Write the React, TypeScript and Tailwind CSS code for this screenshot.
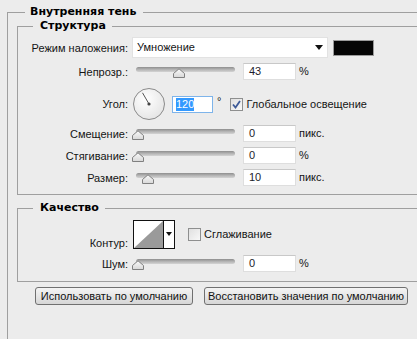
import React from "react";

const font = { fontFamily: '"Liberation Sans", Arial, sans-serif' };
const headFont = { fontFamily: '"DejaVu Sans", "Liberation Sans", sans-serif' };

function Thumb({ cls }: { cls: string }) {
  return (
    <svg className={`absolute top-[5px] ${cls}`} width="12" height="10" viewBox="0 0 12 10">
      <defs>
        <linearGradient id="tg" x1="0" y1="0" x2="0" y2="1">
          <stop offset="0" stopColor="#fafafa" />
          <stop offset="1" stopColor="#d8d8d8" />
        </linearGradient>
      </defs>
      <path d="M0.5 9.5 V5.5 L6 0.8 L11.5 5.5 V9.5 Z" fill="url(#tg)" stroke="#808080" strokeWidth="1" />
    </svg>
  );
}

function Slider({ thumb }: { thumb: string }) {
  return (
    <div className="relative ml-[4px] h-[17px] w-[107px]">
      <div className="ml-[4px] mt-[4px] h-[5px] w-[99px] rounded-full bg-gradient-to-b from-[#8e8e8e] via-[#b4b4b4] to-[#d4d4d4]" />
      <Thumb cls={thumb} />
    </div>
  );
}

function NumInput({ value }: { value: string }) {
  return (
    <div className="ml-[4px] flex h-[17px] w-[53px] items-center border border-[#dedede] border-t-[#c8c8c8] bg-white pl-[5px] text-[#1c1c2c]">
      {value}
    </div>
  );
}

function Label({ text }: { text: string }) {
  return <div className="w-[110px] shrink-0 text-right leading-[12px]">{text}</div>;
}

function SliderRow({ label, thumb, value, unit, mt }: { label: string; thumb: string; value: string; unit: string; mt: string }) {
  return (
    <div className={`flex h-[17px] items-center ${mt}`}>
      <Label text={label} />
      <Slider thumb={thumb} />
      <NumInput value={value} />
      <span className="ml-[3px]">{unit}</span>
    </div>
  );
}

function Checkbox({ checked }: { checked: boolean }) {
  return (
    <div className="flex h-[13px] w-[13px] items-center justify-center border border-[#8e8f8f] bg-gradient-to-br from-[#e0e0e0] to-[#f8f8f8]">
      {checked && (
        <svg width="9" height="9" viewBox="0 0 9 9">
          <path d="M1 4.5 L3.5 7.5 L8 1" fill="none" stroke="#3d5a98" strokeWidth="1.8" />
        </svg>
      )}
    </div>
  );
}

function Btn({ text, w }: { text: string; w: string }) {
  return (
    <div className={`flex h-[18px] ${w} items-center justify-center whitespace-nowrap rounded-[3px] border border-[#707070] bg-gradient-to-b from-[#f4f4f4] via-[#e6e6e6] to-[#d6d6d6] text-[#111]`}>
      {text}
    </div>
  );
}

export default function App() {
  return (
    <div className="h-[339px] w-[417px] overflow-hidden bg-[#ececec] pl-[7px] pt-[6px] text-[11px] text-[#141414]" style={font}>
      <fieldset className="h-[400px] border-l border-t border-[#9f9f9f]">
        <legend className="ml-[17px] pl-[5px] pr-[7px] text-[11px] font-bold leading-[12px] text-black" style={headFont}>Внутренняя тень</legend>

        <fieldset className="ml-[9px] mt-[2px] border-b border-l border-t border-[#9f9f9f] pb-[8px]">
          <legend className="ml-[15px] pl-[7px] pr-[6px] text-[11px] font-bold leading-[12px] text-black" style={headFont}>Структура</legend>

          <div className="mt-[5px] flex h-[21px] items-center">
            <Label text="Режим наложения:" />
            <div className="ml-[4px] flex h-[21px] w-[196px] items-center justify-between border border-[#e2e2e2] bg-white pl-[4px] pr-[4px]">
              <span>Умножение</span>
              <svg width="8" height="5" viewBox="0 0 8 5">
                <path d="M0 0 H8 L4 5 Z" fill="#111" />
              </svg>
            </div>
            <div className="ml-[5px] h-[16px] w-[41px] border border-[#9a9a9a] bg-[#050505]" />
          </div>

          <SliderRow label="Непрозр.:" thumb="left-[41px]" value="43" unit="%" mt="mt-[5px]" />

          <div className="mt-[8px] flex h-[32px] items-center">
            <Label text="Угол:" />
            <svg className="ml-[5px]" width="32" height="32" viewBox="0 0 32 32">
              <defs>
                <radialGradient id="dg" cx="0.4" cy="0.35" r="0.75">
                  <stop offset="0" stopColor="#ffffff" />
                  <stop offset="1" stopColor="#e2e2e2" />
                </radialGradient>
              </defs>
              <circle cx="16" cy="16" r="15.5" fill="url(#dg)" stroke="#8a8a8a" strokeWidth="1" />
              <line x1="16" y1="16" x2="9.5" y2="4.8" stroke="#555" strokeWidth="1" />
              <circle cx="16" cy="16" r="1.6" fill="#444" />
            </svg>
            <div className="ml-[7px] flex h-[17px] w-[41px] items-center border border-[#7eb4ea] bg-white pl-[3px]">
              <span className="bg-[#3399ff] leading-[13px] text-white">120</span>
            </div>
            <span className="mb-[6px] ml-[4px]">°</span>
            <div className="ml-[9px]">
              <Checkbox checked />
            </div>
            <span className="ml-[3px]">Глобальное освещение</span>
          </div>

          <SliderRow label="Смещение:" thumb="left-0" value="0" unit="пикс." mt="mt-[5px]" />
          <SliderRow label="Стягивание:" thumb="left-0" value="0" unit="%" mt="mt-[5px]" />
          <SliderRow label="Размер:" thumb="left-[10px]" value="10" unit="пикс." mt="mt-[5px]" />
        </fieldset>

        <fieldset className="ml-[9px] mt-[7px] border-b border-l border-t border-[#9f9f9f] pb-[9px]">
          <legend className="ml-[15px] pl-[7px] pr-[6px] text-[11px] font-bold leading-[12px] text-black" style={headFont}>Качество</legend>

          <div className="mt-[6px] flex h-[29px] items-end">
            <Label text="Контур:" />
            <div className="ml-[5px] flex h-[29px] w-[42px] border border-[#111] bg-white">
              <svg width="29" height="27" viewBox="0 0 29 27" className="shrink-0">
                <path d="M0 27 L29 0 V27 Z" fill="#9a9a9a" />
              </svg>
              <div className="flex w-[11px] justify-center border-l border-[#111] pt-[11px]">
                <svg width="6" height="4" viewBox="0 0 6 4">
                  <path d="M0 0 H6 L3 4 Z" fill="#111" />
                </svg>
              </div>
            </div>
            <div className="ml-[13px] flex items-center self-center">
              <Checkbox checked={false} />
              <span className="ml-[3px]">Сглаживание</span>
            </div>
          </div>

          <SliderRow label="Шум:" thumb="left-0" value="0" unit="%" mt="mt-[6px]" />
        </fieldset>

        <div className="ml-[27px] mt-[5px] flex">
          <Btn text="Использовать по умолчанию" w="w-[158px]" />
          <div className="ml-[11px]">
            <Btn text="Восстановить значения по умолчанию" w="w-[204px]" />
          </div>
        </div>
      </fieldset>
    </div>
  );
}
